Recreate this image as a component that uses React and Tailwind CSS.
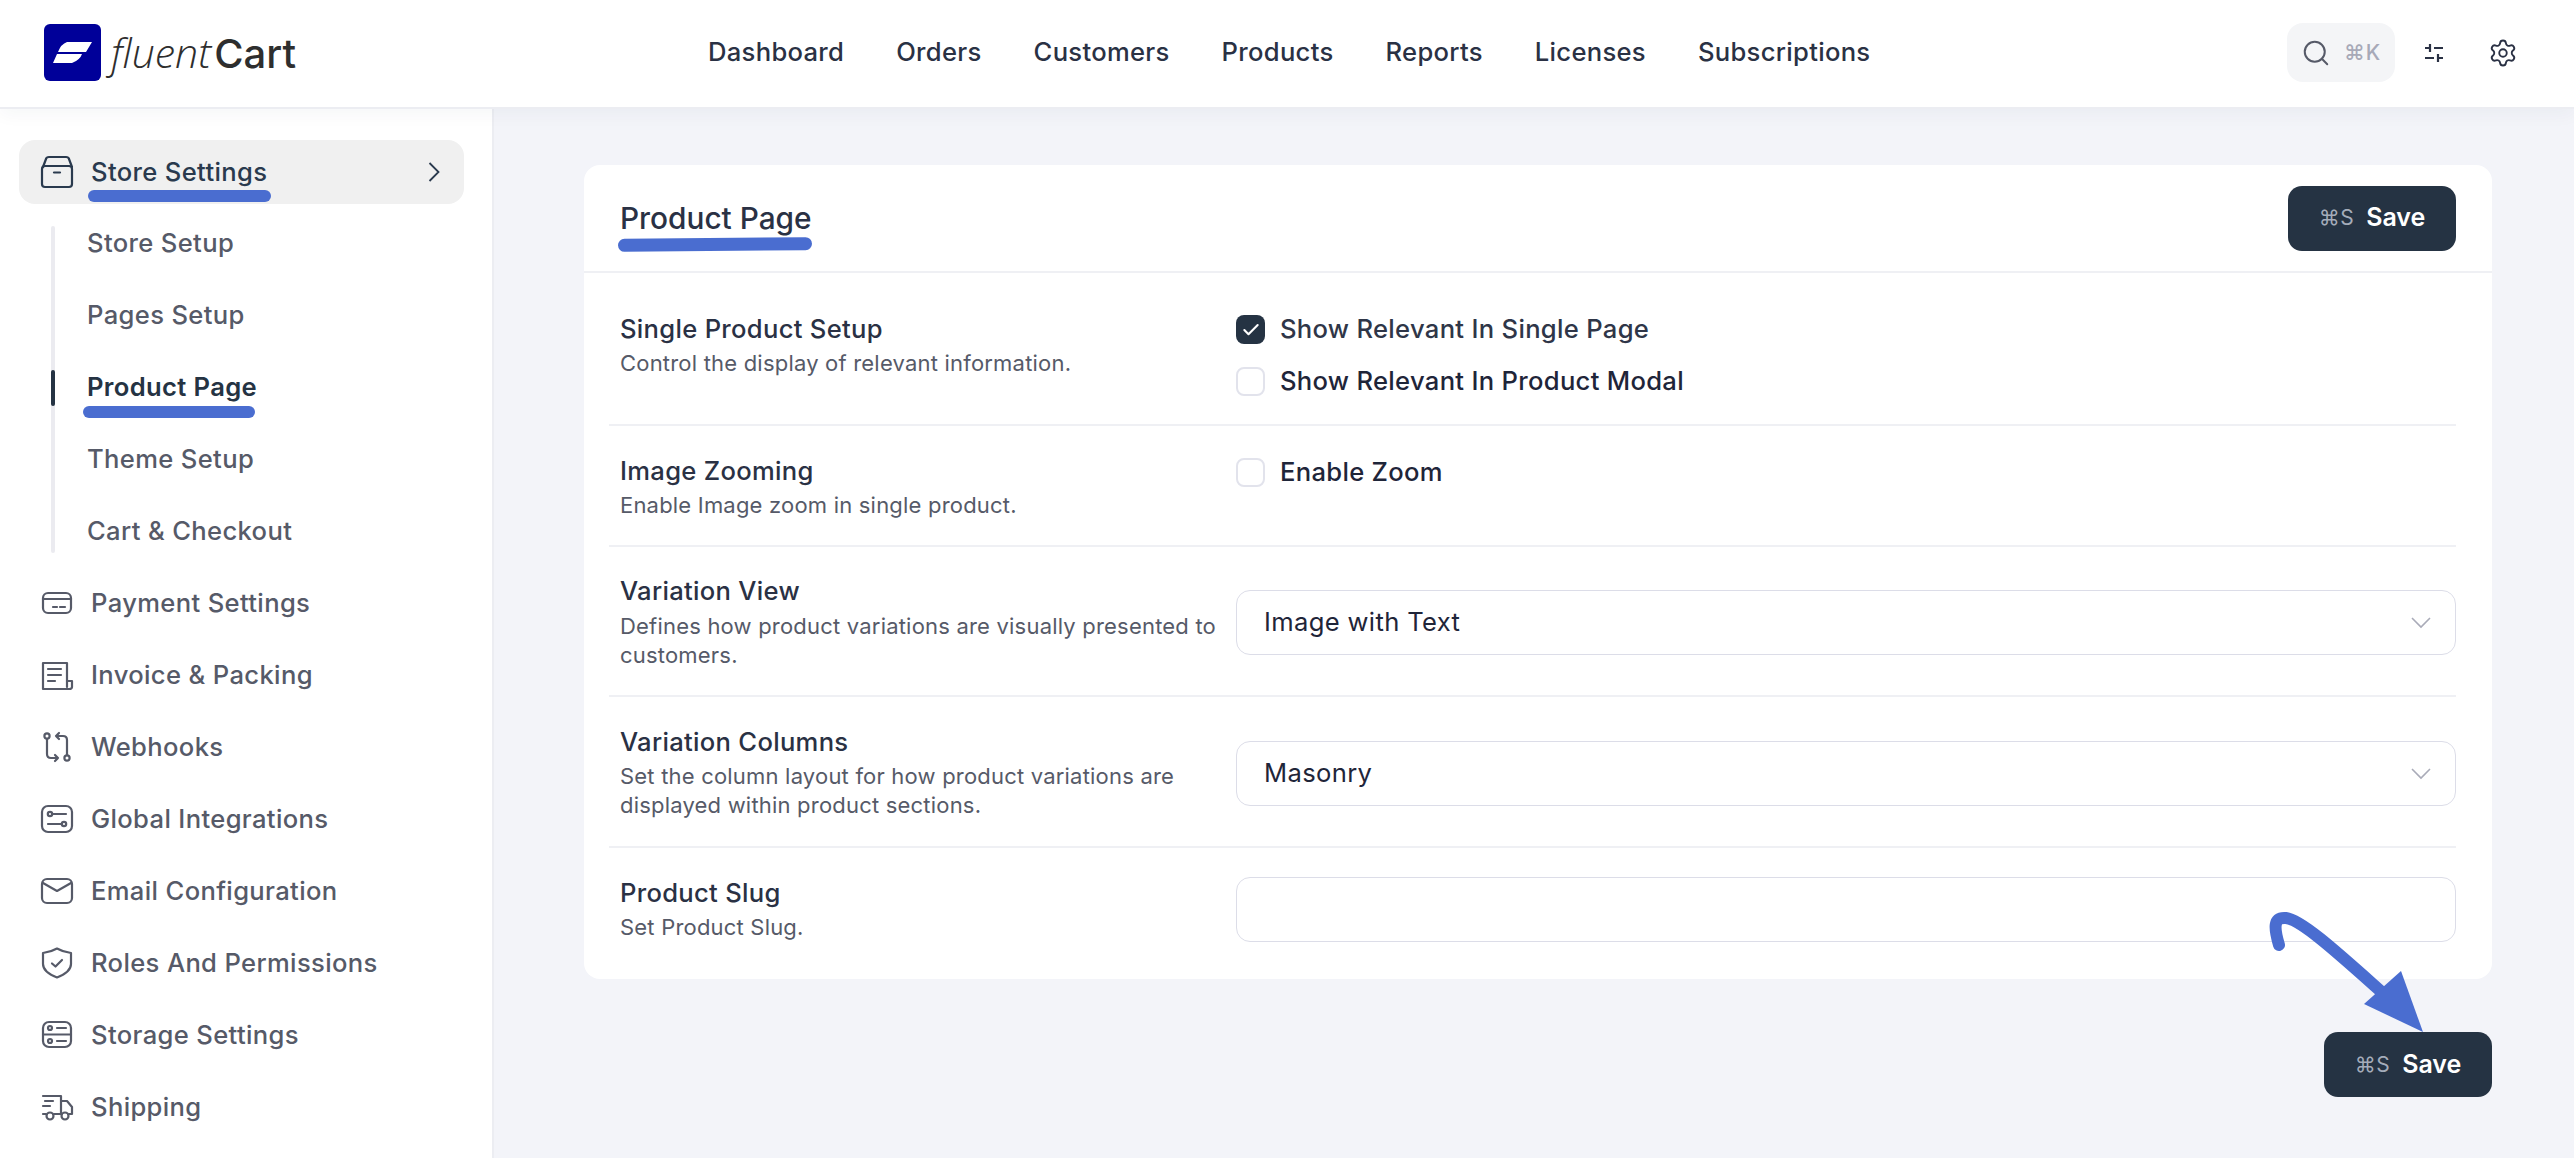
import React from 'react';
import { Search, Settings, Check } from 'lucide-react';

const Ico = ({ children }) => (
  <svg width="34" height="34" viewBox="0 0 34 34" fill="none" stroke="currentColor" strokeWidth="2.2" strokeLinecap="round" strokeLinejoin="round" className="shrink-0">
    {children}
  </svg>
);

const StoreIcon = () => (
  <Ico>
    <path d="M3 12 L6 4 Q6.500 2 9 2 H26 Q28.500 2 29 4 L32 12" />
    <rect x="2" y="11" width="30" height="21" rx="3" />
    <path d="M14 17.500 H20" />
  </Ico>
);
const CardIcon = () => (
  <Ico>
    <rect x="3" y="7" width="28" height="20" rx="5" />
    <path d="M3 13 H31 M13 21 H17 M20 21 H25" />
  </Ico>
);
const InvoiceIcon = () => (
  <Ico>
    <path d="M27 29 V5 H3 V31 H29" />
    <path d="M27 23 H32 V29 Q32 31 29 31 M8 11 H21 M8 17 H21 M8 23 H15" />
  </Ico>
);
const WebhookIcon = () => (
  <Ico>
    <circle cx="7" cy="6" r="2.600" />
    <circle cx="27" cy="28" r="2.600" />
    <path d="M7 9 V24 Q7 28 11 28 H18 M15 25 L18 28 L15 31" />
    <path d="M27 25 V10 Q27 6 23 6 H16 M19 3 L16 6 L19 9" />
  </Ico>
);
const IntegrationIcon = () => (
  <Ico>
    <rect x="2" y="4" width="30" height="26" rx="6" />
    <circle cx="10" cy="12" r="2.200" />
    <circle cx="24" cy="22" r="2.200" />
    <path d="M13 12 H26 M8 22 H21" />
  </Ico>
);
const MailIcon = () => (
  <Ico>
    <rect x="2" y="5" width="30" height="24" rx="5" />
    <path d="M3 9 L17 17 L31 9" />
  </Ico>
);
const ShieldIcon = () => (
  <Ico>
    <path d="M17 2.500 Q23 6 31 7 V18 Q31 26 17 31.500 Q3 26 3 18 V7 Q11 6 17 2.500 Z" />
    <path d="M12 17.500 L15.500 20.500 L22 14" />
  </Ico>
);
const StorageIcon = () => (
  <Ico>
    <rect x="3" y="4" width="28" height="25" rx="6" />
    <path d="M3 16.500 H31 M17 10 H26 M17 23 H26" />
    <circle cx="10" cy="10" r="2" />
    <circle cx="10" cy="23" r="2" />
  </Ico>
);
const TruckIcon = () => (
  <Ico>
    <path d="M3 6 H21 V24 M5 11 H13 M3 16 H10 M3 24 H6" />
    <path d="M21 11 H27 L32 17 V24 H29 M21 24 H14" />
    <circle cx="10" cy="26" r="3.500" />
    <circle cx="25" cy="26" r="3.500" />
  </Ico>
);

const SaveButton = () => (
  <button className="w-[168px] h-[65px] rounded-[14px] bg-[#253343] text-white flex items-center justify-center gap-[12px]">
    <span className="text-[21px] text-[#a4acba] tracking-[0.5px]">⌘S</span>
    <span className="text-[25px] font-semibold">Save</span>
  </button>
);

const Underline = ({ className }) => (
  <div className={`absolute h-[12px] rounded-full bg-[#4a6dd0] ${className}`} />
);

const navItems = ['Dashboard', 'Orders', 'Customers', 'Products', 'Reports', 'Licenses', 'Subscriptions'];

const subItems = ['Store Setup', 'Pages Setup', 'Product Page', 'Theme Setup', 'Cart & Checkout'];

const sideItems = [
  ['Payment Settings', CardIcon],
  ['Invoice & Packing', InvoiceIcon],
  ['Webhooks', WebhookIcon],
  ['Global Integrations', IntegrationIcon],
  ['Email Configuration', MailIcon],
  ['Roles And Permissions', ShieldIcon],
  ['Storage Settings', StorageIcon],
  ['Shipping', TruckIcon],
];

const Setting = ({ title, desc, children, className, border = true }) => (
  <div className={`ml-[25px] mr-[36px] flex ${border ? 'border-b-2 border-[#eff0f4]' : ''} ${className}`}>
    <div className="w-[627px] shrink-0 pl-[11px]">
      <div className="text-[25.600px] leading-[36px] font-medium tracking-[0.3px] text-[#2a3144]">{title}</div>
      <div className="text-[22px] leading-[29px] text-[#565a68] tracking-[0.2px] mt-[2px]">{desc}</div>
    </div>
    <div className="flex-1">{children}</div>
  </div>
);

const CheckRow = ({ label, checked }) => (
  <div className="flex items-center gap-[15px] h-[29px]">
    <div className={`w-[29px] h-[29px] rounded-[8px] flex items-center justify-center ${checked ? 'bg-[#253343]' : 'border-2 border-[#e2e3ec] bg-white'}`}>
      {checked && <Check size={20} strokeWidth={2.5} className="text-white" />}
    </div>
    <span className={`text-[25.600px] font-medium tracking-[0.3px] ${checked ? 'text-[#2f3648]' : 'text-[#1f2539]'}`}>{label}</span>
  </div>
);

const Select = ({ value }) => (
  <div className="h-[65px] rounded-[14px] border-[1.5px] border-[#dcdde8] flex items-center justify-between pl-[27px] pr-[24px]">
    <span className="text-[25.600px] tracking-[0.35px] text-[#1f2539]">{value}</span>
    {value && (
      <svg width="20" height="12" viewBox="0 0 20 12" fill="none" stroke="#a9abb8" strokeWidth="1.600">
        <path d="M1 1 L10 10 L19 1" />
      </svg>
    )}
  </div>
);

export default function App() {
  return (
    <div className="h-[1158px] w-[2574px] overflow-hidden flex flex-col bg-[#f3f4f9] font-['Inter',sans-serif] relative">
      {/* top bar */}
      <header className="h-[109px] shrink-0 bg-white pb-[2px] border-b-2 border-[#ecedf2] shadow-[0_6px_16px_rgba(30,40,80,0.04)] flex items-center relative z-10">
        <div className="w-[660px] pl-[44px] flex items-center gap-[10px] shrink-0">
          <svg width="57" height="57" viewBox="0 0 57 57">
            <rect width="57" height="57" rx="6" fill="#000099" />
            <path d="M23 18 H48 L42 28 H14 Q17 20 23 18 Z M13 30 H38 Q36 36 28 39 H9 Z" fill="#fff" />
          </svg>
          <div className="text-[#2e2e2e] leading-none flex items-baseline">
            <span className="font-['Open_Sans',sans-serif] italic font-light text-[41px]">fluent</span>
            <span className="font-medium text-[40px] ml-[3px]">Cart</span>
          </div>
        </div>
        <nav className="flex items-center gap-[52px] ml-[48px]">
          {navItems.map((n) => (
            <span key={n} className="text-[25.600px] font-medium text-[#2a3144] tracking-[0.3px]">{n}</span>
          ))}
        </nav>
        <div className="ml-auto flex items-center">
          <div className="w-[108px] h-[59px] rounded-[16px] bg-[#f4f5f7] flex items-center pl-[14px] gap-[13px]">
            <Search size={30} strokeWidth={1.6} className="text-[#565a68]" />
            <span className="text-[21px] text-[#a7a9b8] font-medium tracking-[1px]">⌘K</span>
          </div>
          <svg width="20" height="20" viewBox="0 0 20 20" fill="none" stroke="#2a3144" strokeWidth="2.200" className="ml-[29px]">
            <path d="M1 5 H6 M10 5 H19 M6 1 V9 M1 15 H10 M14 15 H19 M14 11 V19" />
          </svg>
          <Settings size={30} strokeWidth={1.5} className="text-[#2a3144] ml-[44px] mr-[56px]" />
        </div>
      </header>

      <div className="flex flex-1 min-h-0">
        {/* sidebar */}
        <aside className="w-[494px] shrink-0 bg-white border-r-2 border-[#ecedf2] pt-[31px] pl-[19px] pr-[28px] text-[25.600px] font-medium tracking-[0.35px] text-[#565a68]">
          <div className="relative h-[64px] rounded-[16px] bg-[#f0f0f0] flex items-center pl-[21px] pr-[24px] text-[#2a3a4e]">
            <StoreIcon />
            <span className="ml-[17px] flex-1">Store Settings</span>
            <svg width="12" height="20" viewBox="0 0 12 20" fill="none" stroke="currentColor" strokeWidth="1.800">
              <path d="M1.500 1 L10.500 10 L1.500 19" />
            </svg>
            <Underline className="left-[69px] top-[50px] w-[183px]" />
          </div>
          <div className="relative ml-[32px] mt-[3px]">
            <div className="absolute left-0 top-[19px] bottom-[14px] w-[4px] rounded-sm bg-[#ebebf0]" />
            {subItems.map((s) => (
              <div key={s} className={`relative h-[72px] flex items-center pl-[36px] ${s === 'Product Page' ? 'text-[#253343] font-semibold' : ''}`}>
                {s}
                {s === 'Product Page' && (
                  <>
                    <div className="absolute left-0 top-[19px] w-[4px] h-[36px] rounded-sm bg-[#253343]" />
                    <Underline className="left-[32px] top-[55px] w-[172px]" />
                  </>
                )}
              </div>
            ))}
          </div>
          {sideItems.map(([label, Icon]) => (
            <div key={label} className="h-[72px] flex items-center pl-[21px]">
              <Icon />
              <span className="ml-[17px]">{label}</span>
            </div>
          ))}
        </aside>

        {/* main */}
        <main className="flex-1 pt-[56px] pl-[90px] pr-[82px] min-w-0">
          <section className="h-[814px] rounded-[16px] bg-white">
            <div className="relative h-[108px] border-b-2 border-[#eff0f4] flex items-center justify-between pl-[36px] pr-[36px]">
              <h1 className="text-[29.800px] font-medium text-[#2a3144]">Product Page</h1>
              <SaveButton />
              <div className="absolute left-[34px] top-[73px] w-[194px] h-[13px] rounded-full bg-[#4a6dd0] -rotate-[0.5deg]" />
            </div>
            <Setting title="Single Product Setup" desc="Control the display of relevant information." className="h-[153px] pt-[38px]">
              <div className="flex flex-col gap-[23px] pt-[4px]">
                <CheckRow label="Show Relevant In Single Page" checked />
                <CheckRow label="Show Relevant In Product Modal" />
              </div>
            </Setting>
            <Setting title="Image Zooming" desc="Enable Image zoom in single product." className="h-[121px] pt-[27px]">
              <div className="pt-[5px]"><CheckRow label="Enable Zoom" /></div>
            </Setting>
            <Setting title="Variation View" desc={<span className="block mt-[3px]">Defines how product variations are visually presented to<br />customers.</span>} className="h-[150px] pt-[26px]">
              <div className="pt-[17px]"><Select value="Image with Text" /></div>
            </Setting>
            <Setting title="Variation Columns" desc={<>Set the column layout for how product variations are<br />displayed within product sections.</>} className="h-[151px] pt-[27px]">
              <div className="pt-[17px]"><Select value="Masonry" /></div>
            </Setting>
            <Setting title="Product Slug" desc="Set Product Slug." border={false} className="h-[120px] pt-[27px]">
              <div className="pt-[2px]"><Select value="" /></div>
            </Setting>
          </section>
          <div className="flex justify-end mt-[53px]">
            <SaveButton />
          </div>
        </main>
      </div>

      {/* annotation arrow */}
      <svg className="absolute left-[2240px] top-[900px]" width="200" height="200" viewBox="0 0 200 200" fill="none">
        <path d="M39 45 C34 28 33 17 46 18 C62 20 100 55 145 95" stroke="#4a6dd0" strokeWidth="12" strokeLinecap="round" />
        <path d="M161 71 L124 104 L183 132 Z" fill="#4a6dd0" />
      </svg>
    </div>
  );
}
